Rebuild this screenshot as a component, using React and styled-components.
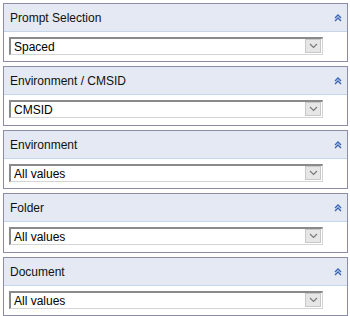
import React from "react";
import styled, { createGlobalStyle } from "styled-components";

const GlobalStyle = createGlobalStyle`
  * {
    margin: 0;
    padding: 0;
    box-sizing: border-box;
  }
  body {
    background: #ffffff;
    font-family: Tahoma, "Liberation Sans", "DejaVu Sans", sans-serif;
    font-size: 11px;
    color: #000;
  }
`;

const Stack = styled.div`
  display: flex;
  flex-direction: column;
  gap: 4px;
  padding: 3px 2px 0 3px;
  width: 350px;
`;

const Panel = styled.section`
  height: ${(p) => (p.$tall ? 60 : 59)}px;
  border: 1px solid #8c8ca4;
  background: #ffffff;
  display: flex;
  flex-direction: column;
`;

const Header = styled.div`
  height: 28px;
  background: #e4e9f3;
  border-bottom: 1px solid #c5d5ea;
  display: flex;
  align-items: center;
  justify-content: space-between;
  padding: 0 5px 0 6px;
  font-size: 12px;
  color: #111;
`;

const Body = styled.div`
  padding: 5px 24px 0 5px;
`;

const Select = styled.div`
  height: 18px;
  display: flex;
  align-items: stretch;
  border-top: 2px solid #8a8a8a;
  border-left: 2px solid #8a8a8a;
  border-right: 1px solid #d4d4d4;
  border-bottom: 1px solid #d4d4d4;
  background: #fff;
`;

const Value = styled.span`
  flex: 1;
  display: flex;
  align-items: center;
  padding-left: 3px;
  font-size: 12px;
  color: #000;
`;

const DropButton = styled.span`
  width: 16px;
  margin: 0 1px 1px 0;
  background: #e6e6e6;
  border: 1px solid #c8c8c8;
  display: flex;
  align-items: center;
  justify-content: center;
`;

const Collapse = () => (
  <svg width="8" height="8" viewBox="0 0 8 8">
    <path d="M1 4 L4 1 L7 4 M1 7 L4 4 L7 7" fill="none" stroke="#3a64b4" strokeWidth="1.4" />
  </svg>
);

const Chevron = () => (
  <svg width="9" height="6" viewBox="0 0 9 6">
    <path d="M1 1 L4.5 4.5 L8 1" fill="none" stroke="#7a7a7a" strokeWidth="1.2" />
  </svg>
);

const prompts = [
  { title: "Prompt Selection", value: "Spaced" },
  { title: "Environment / CMSID", value: "CMSID", tall: true },
  { title: "Environment", value: "All values" },
  { title: "Folder", value: "All values", tall: true },
  { title: "Document", value: "All values" },
];

const App = () => (
  <>
    <GlobalStyle />
    <Stack>
      {prompts.map((p) => (
        <Panel key={p.title} $tall={p.tall}>
          <Header>
            <span>{p.title}</span>
            <Collapse />
          </Header>
          <Body>
            <Select>
              <Value>{p.value}</Value>
              <DropButton>
                <Chevron />
              </DropButton>
            </Select>
          </Body>
        </Panel>
      ))}
    </Stack>
  </>
);

export default App;
